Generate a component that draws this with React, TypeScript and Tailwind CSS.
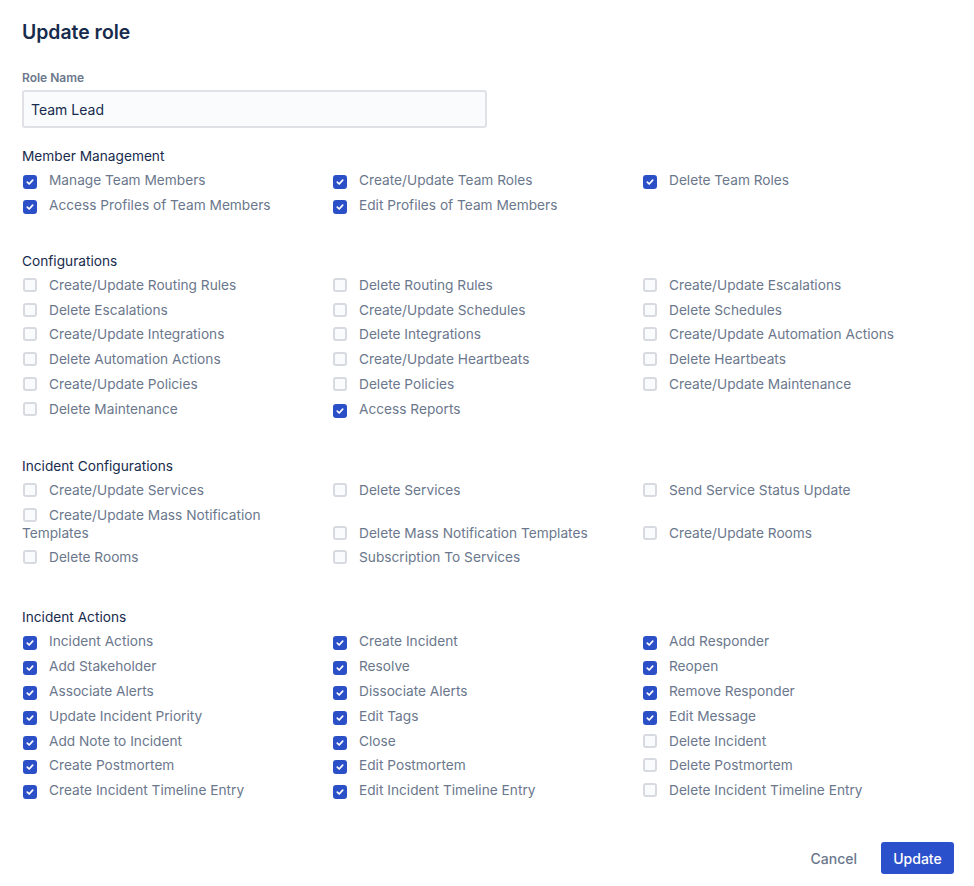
import { FunctionComponent } from "react";

interface IPerm {
    label: string
    checked?: boolean
}

interface ISection {
    title: string
    gap: string
    items: IPerm[]
}

const sections: ISection[] = [
    {
        title: "Member Management",
        gap: "mt-[19px]",
        items: [
            { label: "Manage Team Members", checked: true },
            { label: "Create/Update Team Roles", checked: true },
            { label: "Delete Team Roles", checked: true },
            { label: "Access Profiles of Team Members", checked: true },
            { label: "Edit Profiles of Team Members", checked: true },
        ],
    },
    {
        title: "Configurations",
        gap: "mt-[38px]",
        items: [
            { label: "Create/Update Routing Rules" },
            { label: "Delete Routing Rules" },
            { label: "Create/Update Escalations" },
            { label: "Delete Escalations" },
            { label: "Create/Update Schedules" },
            { label: "Delete Schedules" },
            { label: "Create/Update Integrations" },
            { label: "Delete Integrations" },
            { label: "Create/Update Automation Actions" },
            { label: "Delete Automation Actions" },
            { label: "Create/Update Heartbeats" },
            { label: "Delete Heartbeats" },
            { label: "Create/Update Policies" },
            { label: "Delete Policies" },
            { label: "Create/Update Maintenance" },
            { label: "Delete Maintenance" },
            { label: "Access Reports", checked: true },
        ],
    },
    {
        title: "Incident Configurations",
        gap: "mt-[39px]",
        items: [
            { label: "Create/Update Services" },
            { label: "Delete Services" },
            { label: "Send Service Status Update" },
            { label: "Create/Update Mass Notification Templates" },
            { label: "Delete Mass Notification Templates" },
            { label: "Create/Update Rooms" },
            { label: "Delete Rooms" },
            { label: "Subscription To Services" },
        ],
    },
    {
        title: "Incident Actions",
        gap: "mt-[42px]",
        items: [
            { label: "Incident Actions", checked: true },
            { label: "Create Incident", checked: true },
            { label: "Add Responder", checked: true },
            { label: "Add Stakeholder", checked: true },
            { label: "Resolve", checked: true },
            { label: "Reopen", checked: true },
            { label: "Associate Alerts", checked: true },
            { label: "Dissociate Alerts", checked: true },
            { label: "Remove Responder", checked: true },
            { label: "Update Incident Priority", checked: true },
            { label: "Edit Tags", checked: true },
            { label: "Edit Message", checked: true },
            { label: "Add Note to Incident", checked: true },
            { label: "Close", checked: true },
            { label: "Delete Incident" },
            { label: "Create Postmortem", checked: true },
            { label: "Edit Postmortem", checked: true },
            { label: "Delete Postmortem" },
            { label: "Create Incident Timeline Entry", checked: true },
            { label: "Edit Incident Timeline Entry", checked: true },
            { label: "Delete Incident Timeline Entry" },
        ],
    },
]

const Box: FunctionComponent<{ checked?: boolean }> = ({ checked }) => {
    if (checked) {
        return (
            <span className="inline-flex items-center justify-center w-[14px] h-[14px] rounded-[3px] bg-[#2b4fc6] ml-[1px] mr-[12px] align-[-2px]">
                <svg width="10" height="10" viewBox="0 0 10 10" fill="none">
                    <path d="M2.3 5.2 L4.2 7 L7.7 3.2" stroke="white" strokeWidth="1.7" strokeLinecap="round" strokeLinejoin="round" />
                </svg>
            </span>
        )
    }
    return (
        <span className="inline-block w-[14px] h-[14px] rounded-[3px] border-2 border-[#d7dae0] bg-[#fafbfc] ml-[1px] mr-[12px] align-[-2px]" />
    )
}

const Section: FunctionComponent<{ s: ISection }> = ({ s }) => (
    <div className={s.gap}>
        <h2 className="text-[13.7px] leading-[18px] text-[#172b4d]">{s.title}</h2>
        <div className="grid grid-cols-3 items-end gap-y-[6.8px] mt-[6px]">
            {s.items.map((p) => (
                <label key={p.label} className="block pr-[20px] text-[13.7px] leading-[18px] text-[#6b778c]">
                    <Box checked={p.checked} />
                    {p.label}
                </label>
            ))}
        </div>
    </div>
)

export default function App() {
    return (
        <div className="w-[974px] h-[886px] bg-white px-[22px] pt-[20px] font-['Inter',sans-serif]">
            <h1 className="text-[19.4px] leading-[24px] font-semibold text-[#172b4d]">Update role</h1>
            <div className="mt-[26px] text-[12px] leading-[16px] font-semibold text-[#6b778c]">Role Name</div>
            <div className="mt-[4px] w-[465px] h-[38px] flex items-center px-[7px] bg-[#fafbfc] border-2 border-[#dfe1e6] rounded-[3px] text-[14px] text-[#172b4d]">
                Team Lead
            </div>
            {sections.map((s) => (
                <Section key={s.title} s={s} />
            ))}
            <div className="flex justify-end items-center gap-[12px] mt-[43px] -mr-[2px]">
                <button className="h-[32px] px-[12px] text-[14px] font-medium text-[#6b778c]">Cancel</button>
                <button className="h-[32px] w-[73px] rounded-[3px] bg-[#2b50cb] text-[14px] font-medium text-white">Update</button>
            </div>
        </div>
    )
}
